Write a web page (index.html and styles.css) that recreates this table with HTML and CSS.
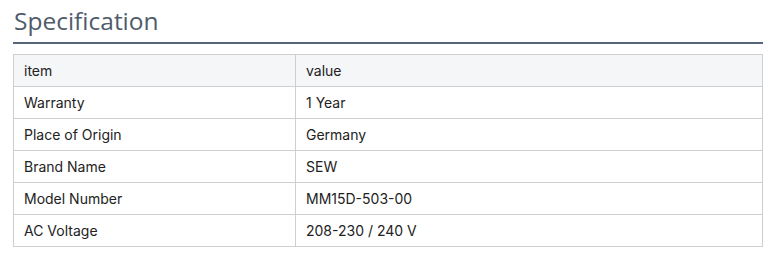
FILE: index.html
```html
<!DOCTYPE html>
<html>
<head>
<meta charset="utf-8">
<link rel="stylesheet" href="styles.css">
</head>
<body>
<section class="spec">
  <h2 class="spec-title">Specification</h2>
  <table class="spec-table">
    <tr class="head"><td class="k">item</td><td>value</td></tr>
    <tr><td class="k">Warranty</td><td>1 Year</td></tr>
    <tr><td class="k">Place of Origin</td><td>Germany</td></tr>
    <tr><td class="k">Brand Name</td><td>SEW</td></tr>
    <tr><td class="k">Model Number</td><td>MM15D-503-00</td></tr>
    <tr><td class="k">AC Voltage</td><td>208-230 / 240 V</td></tr>
  </table>
</section>
</body>
</html>
```
FILE: styles.css
```css
html, body { margin: 0; padding: 0; background: #fff; }
.spec { padding: 0 11px 0 13px; }
.spec-title {
  margin: 0;
  font-family: "Open Sans", sans-serif;
  font-weight: 400;
  font-size: 24.5px;
  line-height: 42px;
  color: #4f5b6b;
  border-bottom: 2px solid #56657a;
  padding-left: 1px;
}
.spec-table {
  margin-top: 10px;
  width: 750px;
  border-collapse: collapse;
  font-family: Inter, sans-serif;
  font-size: 14px;
  color: #222;
}
.spec-table td {
  border: 1px solid #cfcfcf;
  height: 32px;
  padding: 0 0 0 10px;
  box-sizing: border-box;
  vertical-align: middle;
}
.spec-table td.k { width: 282px; }
.spec-table tr.head td { background: #f5f6f8; }
```
